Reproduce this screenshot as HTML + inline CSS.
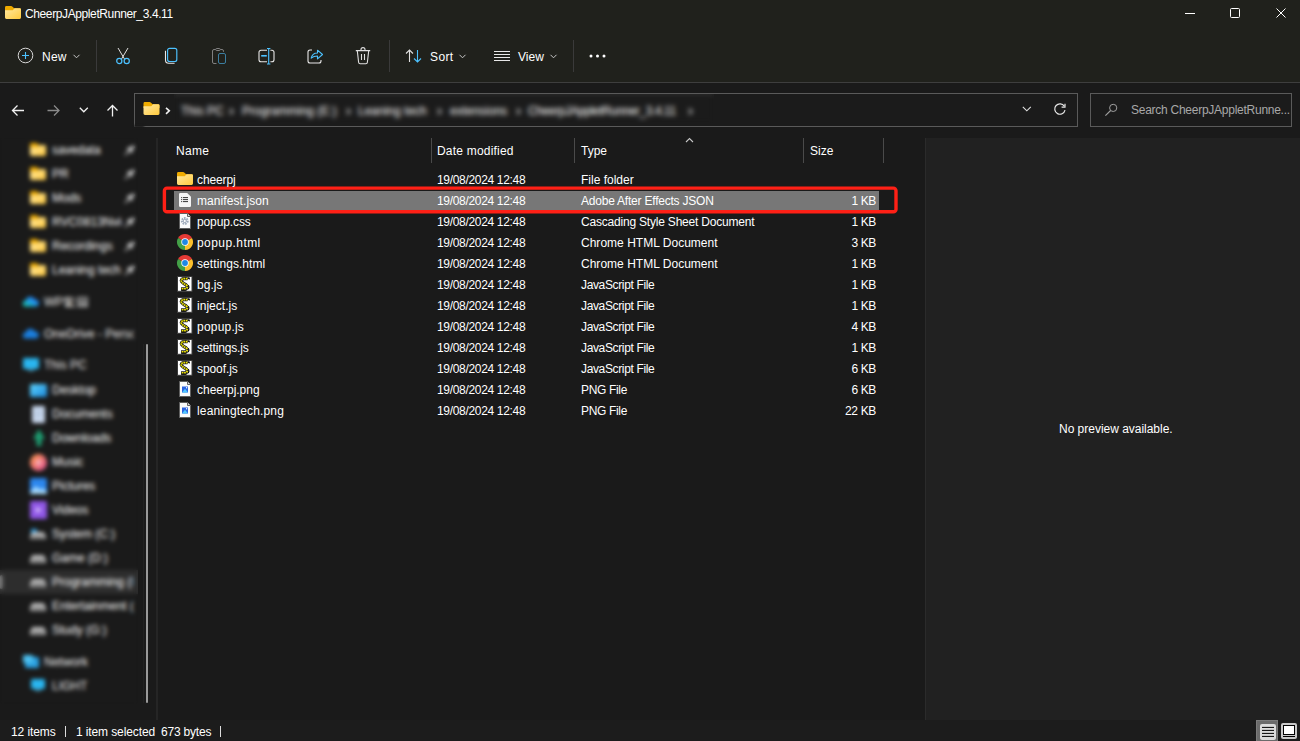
<!DOCTYPE html>
<html><head><meta charset="utf-8">
<style>
*{margin:0;padding:0;box-sizing:border-box}
html,body{width:1300px;height:741px;overflow:hidden;background:#191919;font-family:"Liberation Sans",sans-serif;color:#fff}
.a{position:absolute}
.t{position:absolute;white-space:nowrap;font-size:12px;line-height:14px}
.d{}
.vsep{position:absolute;width:1px;background:#3a3a3a}
svg{position:absolute;overflow:visible}
.blur{position:absolute;backdrop-filter:blur(2.8px);-webkit-backdrop-filter:blur(2.8px)}
.blur2{position:absolute;backdrop-filter:blur(2.2px);-webkit-backdrop-filter:blur(2.2px)}
</style></head><body>
<svg width="0" height="0" style="left:0;top:0"><defs><linearGradient id="fg" x1="0" y1="0" x2="1" y2="1"><stop offset="0" stop-color="#ffe9a3"/><stop offset="1" stop-color="#ffc93c"/></linearGradient><linearGradient id="wg" x1="0" y1="1" x2="1" y2="0"><stop offset="0" stop-color="#19d3a2"/><stop offset="0.6" stop-color="#1f8ff0"/><stop offset="1" stop-color="#2d6cf0"/></linearGradient></defs></svg>
<div class="a" style="left:0;top:0;width:1300px;height:82px;background:#20211c"></div>
<div class="a" style="left:0;top:82px;width:1300px;height:1px;background:#3e3e3e"></div>
<div class="a" style="left:0;top:83px;width:1300px;height:55px;background:#1a1a1a"></div>
<div class="a" style="left:0;top:138px;width:157px;height:582px;background:#1a1a1a"></div>
<div class="a" style="left:158px;top:138px;width:767px;height:582px;background:#1a1a1a"></div>
<div class="a" style="left:925px;top:138px;width:375px;height:582px;background:#212121;border-left:1px solid #2b2b2b"></div>
<div class="a" style="left:0;top:720px;width:1300px;height:21px;background:#1c1c1c"></div>
<svg style="left:5px;top:6px" width="16" height="13" viewBox="0 0 16 13"><path d="M1.4 0H6.2a1.4 1.4 0 0 1 1 .4L9.2 2.2H14.6A1.4 1.4 0 0 1 16 3.6V6H0V1.4A1.4 1.4 0 0 1 1.4 0z" fill="#efab00"/><path d="M0 4.2H7.3a1 1 0 0 0 .7-.3L9.6 2.2H14.6A1.4 1.4 0 0 1 16 3.6V11.6A1.4 1.4 0 0 1 14.6 13H1.4A1.4 1.4 0 0 1 0 11.6z" fill="url(#fg)"/></svg>
<div class="t" style="left:25px;top:7px;letter-spacing:-0.388px">CheerpJAppletRunner_3.4.11</div>
<svg style="left:1185px;top:12px" width="10" height="2"><rect x="0" y="1" width="10" height="1" fill="#fff"/></svg>
<svg style="left:1230px;top:8px" width="10" height="10"><rect x="0.5" y="0.5" width="9" height="9" rx="1" fill="none" stroke="#fff" stroke-width="1"/></svg>
<svg style="left:1276px;top:8px" width="10" height="10"><path d="M0.5 0.5L9.5 9.5M9.5 0.5L0.5 9.5" stroke="#fff" stroke-width="1"/></svg>
<svg style="left:17px;top:47px" width="17" height="17" viewBox="0 0 17 17">
  <circle cx="8.5" cy="8.5" r="7.3" fill="none" stroke="#d8d8d8" stroke-width="1"/>
  <path d="M8.5 5v7M5 8.5h7" stroke="#4cc2ff" stroke-width="1.1"/></svg>
<div class="t" style="left:42px;top:50px;letter-spacing:0.25px">New</div>
<svg style="left:73px;top:54px" width="7" height="5"><path d="M0.5 0.8L3.5 3.8L6.5 0.8" fill="none" stroke="#c8c8c8" stroke-width="1"/></svg>
<div class="vsep" style="left:96px;top:40px;height:32px"></div>
<svg style="left:115px;top:47px" width="16" height="18" viewBox="0 0 16 18">
  <path d="M3 1L9.6 12.2M13 1L6.4 12.2" stroke="#e0e0e0" stroke-width="1" fill="none"/>
  <circle cx="4.3" cy="14" r="2.6" fill="none" stroke="#4cc2ff" stroke-width="1.2"/>
  <circle cx="11.7" cy="14" r="2.6" fill="none" stroke="#4cc2ff" stroke-width="1.2"/></svg>
<svg style="left:164px;top:47px" width="16" height="18" viewBox="0 0 16 18">
  <path d="M1.5 3.8v9.2a3.3 3.3 0 0 0 3.3 3.3h5.8" fill="none" stroke="#e8e8e8" stroke-width="1.1"/>
  <rect x="3.6" y="1.3" width="9.2" height="13.2" rx="2" fill="none" stroke="#4cc2ff" stroke-width="1.15"/></svg>
<svg style="left:211px;top:47px" width="17" height="18" viewBox="0 0 17 18">
  <path d="M5.5 16.5H3a1.5 1.5 0 0 1-1.5-1.5V4A1.5 1.5 0 0 1 3 2.5H4.6M9.4 2.5H11a1.5 1.5 0 0 1 1.5 1.5v.8" fill="none" stroke="#808080" stroke-width="1"/>
  <rect x="4.7" y="1.5" width="4.6" height="2" rx="1" fill="none" stroke="#808080" stroke-width="1"/>
  <rect x="7.5" y="6.5" width="7" height="10" rx="1.5" fill="none" stroke="#3c7e9f" stroke-width="1"/></svg>
<svg style="left:258px;top:48px" width="18" height="18" viewBox="0 0 18 18">
  <path d="M9 2.2H3a2 2 0 0 0-2 2v7.6a2 2 0 0 0 2 2h6M12.4 2.2H14a2 2 0 0 1 2 2v7.6a2 2 0 0 1-2 2h-1.6" fill="none" stroke="#e8e8e8" stroke-width="1.1"/>
  <path d="M10.7 0.5v15.5M9 0.5h3.4M9 16h3.4" stroke="#4cc2ff" stroke-width="1.1" fill="none"/>
  <path d="M3.2 7.8h5.6" stroke="#4cc2ff" stroke-width="1.6"/></svg>
<svg style="left:307px;top:48px" width="18" height="17" viewBox="0 0 18 17">
  <path d="M5 2H3a2 2 0 0 0-2 2v9a2 2 0 0 0 2 2h9a2 2 0 0 0 2-2v-1" fill="none" stroke="#e8e8e8" stroke-width="1.1"/>
  <path d="M4.2 10.2C4.8 6.8 7 5 10.5 5V2.2l5 4.3-5 4.3V8C8 8 5.8 8.8 4.2 10.2z" fill="none" stroke="#4cc2ff" stroke-width="1.1" stroke-linejoin="round"/></svg>
<svg style="left:355px;top:47px" width="16" height="18" viewBox="0 0 16 18">
  <path d="M0.8 3.6h14.4M6 3.6V2.6a2 2 0 0 1 4 0v1" fill="none" stroke="#e0e0e0" stroke-width="1.1"/>
  <path d="M2.3 3.8l1.3 11.5a1.6 1.6 0 0 0 1.6 1.4h5.6a1.6 1.6 0 0 0 1.6-1.4l1.3-11.5" fill="none" stroke="#e0e0e0" stroke-width="1.1"/>
  <path d="M6.5 7v6M9.5 7v6" stroke="#e0e0e0" stroke-width="1.1"/></svg>
<div class="vsep" style="left:389px;top:40px;height:32px"></div>
<svg style="left:405px;top:49px" width="18" height="14" viewBox="0 0 18 14">
  <path d="M4.5 13V1M1 4.5L4.5 1L8 4.5" fill="none" stroke="#e0e0e0" stroke-width="1.1"/>
  <path d="M12.5 1v12M9 9.5L12.5 13L16 9.5" fill="none" stroke="#4cc2ff" stroke-width="1.1"/></svg>
<div class="t" style="left:430px;top:50px;letter-spacing:0.4px">Sort</div>
<svg style="left:459px;top:54px" width="7" height="5"><path d="M0.5 0.8L3.5 3.8L6.5 0.8" fill="none" stroke="#c8c8c8" stroke-width="1"/></svg>
<svg style="left:494px;top:50px" width="16" height="12" viewBox="0 0 16 12">
  <path d="M0 1.5h16M0 4.5h16M0 7.5h16M0 10.5h16" stroke="#e8e8e8" stroke-width="1"/></svg>
<div class="t" style="left:518px;top:50px">View</div>
<svg style="left:550px;top:54px" width="7" height="5"><path d="M0.5 0.8L3.5 3.8L6.5 0.8" fill="none" stroke="#c8c8c8" stroke-width="1"/></svg>
<div class="vsep" style="left:573px;top:40px;height:32px"></div>
<svg style="left:589px;top:54px" width="18" height="4"><circle cx="2" cy="2" r="1.5" fill="#fff"/><circle cx="8.5" cy="2" r="1.5" fill="#fff"/><circle cx="15" cy="2" r="1.5" fill="#fff"/></svg>

<svg style="left:11px;top:104px" width="14" height="12" viewBox="0 0 14 12">
  <path d="M13 6.5H1.5M6.5 1.5L1.5 6.5l5 5" fill="none" stroke="#f0f0f0" stroke-width="1.3"/></svg>
<svg style="left:47px;top:104px" width="14" height="12" viewBox="0 0 14 12">
  <path d="M0.5 6.5h11.5M7 1.5l5 5-5 5" fill="none" stroke="#8a8a8a" stroke-width="1.3"/></svg>
<svg style="left:79px;top:107px" width="10" height="6" viewBox="0 0 10 6">
  <path d="M0.8 0.8L4.8 4.8L8.8 0.8" fill="none" stroke="#f0f0f0" stroke-width="1.3"/></svg>
<svg style="left:107px;top:104px" width="12" height="13" viewBox="0 0 12 13">
  <path d="M5.5 12.5V1.5M0.5 6.5l5-5 5 5" fill="none" stroke="#f0f0f0" stroke-width="1.3"/></svg>
<div class="a" style="left:134px;top:93px;width:944px;height:34px;border:1px solid #5a5a5a;background:#1b1b1b"></div>

<div class="a" style="left:134px;top:125px;width:10px;height:3px;background:#1a1a1a;filter:blur(1px)"></div>
<svg style="left:143px;top:102px" width="17" height="13" viewBox="0 0 16 13"><path d="M1.4 0H6.2a1.4 1.4 0 0 1 1 .4L9.2 2.2H14.6A1.4 1.4 0 0 1 16 3.6V6H0V1.4A1.4 1.4 0 0 1 1.4 0z" fill="#efab00"/><path d="M0 4.2H7.3a1 1 0 0 0 .7-.3L9.6 2.2H14.6A1.4 1.4 0 0 1 16 3.6V11.6A1.4 1.4 0 0 1 14.6 13H1.4A1.4 1.4 0 0 1 0 11.6z" fill="url(#fg)"/></svg>
<svg style="left:165px;top:107px" width="6" height="8" viewBox="0 0 6 8">
  <path d="M1 0.8L4.3 3.8L1 6.8" fill="none" stroke="#f0f0f0" stroke-width="1.6"/></svg>
<div class="a" style="left:174px;top:94px;width:540px;height:29px;overflow:hidden">
<div class="t" style="left:7px;top:10px">This PC</div>
<svg style="left:55px;top:14px" width="5" height="7" viewBox="0 0 5 7"><path d="M1 0.8L3.8 3.5L1 6.2" fill="none" stroke="#e8e8e8" stroke-width="1.5"/></svg>
<div class="t" style="left:68px;top:10px">Programming (E:)</div>
<svg style="left:172px;top:14px" width="5" height="7" viewBox="0 0 5 7"><path d="M1 0.8L3.8 3.5L1 6.2" fill="none" stroke="#e8e8e8" stroke-width="1.5"/></svg>
<div class="t" style="left:184px;top:10px">Leaning tech</div>
<svg style="left:263px;top:14px" width="5" height="7" viewBox="0 0 5 7"><path d="M1 0.8L3.8 3.5L1 6.2" fill="none" stroke="#e8e8e8" stroke-width="1.5"/></svg>
<div class="t" style="left:276px;top:10px">extensions</div>
<svg style="left:342px;top:14px" width="5" height="7" viewBox="0 0 5 7"><path d="M1 0.8L3.8 3.5L1 6.2" fill="none" stroke="#e8e8e8" stroke-width="1.5"/></svg>
<div class="t" style="left:354px;top:10px;letter-spacing:-0.388px">CheerpJAppletRunner_3.4.11</div>
<svg style="left:514px;top:14px" width="5" height="7" viewBox="0 0 5 7"><path d="M1 0.8L3.8 3.5L1 6.2" fill="none" stroke="#e8e8e8" stroke-width="1.5"/></svg>
</div>
<div class="blur" style="left:174px;top:94px;width:540px;height:29px"></div>
<svg style="left:1022px;top:106px" width="10" height="6" viewBox="0 0 10 6">
  <path d="M0.8 0.8L4.8 4.8L8.8 0.8" fill="none" stroke="#e0e0e0" stroke-width="1.1"/></svg>
<svg style="left:1053px;top:103px" width="14" height="13" viewBox="0 0 14 13">
  <path d="M11.3 3.2A5.2 5.2 0 1 0 12 7.2" fill="none" stroke="#e8e8e8" stroke-width="1.2"/>
  <path d="M12 0.8v3.4H8.6" fill="none" stroke="#e8e8e8" stroke-width="1.2"/></svg>
<div class="a" style="left:1090px;top:93px;width:202px;height:34px;border:1px solid #5a5a5a;background:#1b1b1b"></div>
<svg style="left:1105px;top:104px" width="13" height="12" viewBox="0 0 13 12">
  <circle cx="8.2" cy="3.9" r="3.6" fill="none" stroke="#a0a0a0" stroke-width="1"/>
  <path d="M5.6 6.5L0.4 11.7" stroke="#a0a0a0" stroke-width="1.1"/></svg>
<div class="t" style="left:1131px;top:103px;color:#a8a8a8;letter-spacing:-0.259px">Search CheerpJAppletRunne...</div>

<svg style="left:30px;top:143px" width="16" height="13" viewBox="0 0 16 13"><path d="M1.4 0H6.2a1.4 1.4 0 0 1 1 .4L9.2 2.2H14.6A1.4 1.4 0 0 1 16 3.6V6H0V1.4A1.4 1.4 0 0 1 1.4 0z" fill="#efab00"/><path d="M0 4.2H7.3a1 1 0 0 0 .7-.3L9.6 2.2H14.6A1.4 1.4 0 0 1 16 3.6V11.6A1.4 1.4 0 0 1 14.6 13H1.4A1.4 1.4 0 0 1 0 11.6z" fill="url(#fg)"/></svg>
<div class="t" style="left:52px;top:143px;width:70px;overflow:hidden">savedata</div>
<svg style="left:124px;top:144px" width="12" height="12" viewBox="0 0 10 10"><path d="M0.8 9.2L3.6 6.4" stroke="#c8c8c8" stroke-width="1.2"/><path d="M2.6 4.2L5.8 7.4L7 6.2L6.6 4.8L8.8 2.6L7.4 1.2L5.2 3.4L3.8 3z" fill="#c8c8c8" stroke="#c8c8c8" stroke-width="0.8" stroke-linejoin="round"/></svg>
<svg style="left:30px;top:167px" width="16" height="13" viewBox="0 0 16 13"><path d="M1.4 0H6.2a1.4 1.4 0 0 1 1 .4L9.2 2.2H14.6A1.4 1.4 0 0 1 16 3.6V6H0V1.4A1.4 1.4 0 0 1 1.4 0z" fill="#efab00"/><path d="M0 4.2H7.3a1 1 0 0 0 .7-.3L9.6 2.2H14.6A1.4 1.4 0 0 1 16 3.6V11.6A1.4 1.4 0 0 1 14.6 13H1.4A1.4 1.4 0 0 1 0 11.6z" fill="url(#fg)"/></svg>
<div class="t" style="left:52px;top:167px;width:70px;overflow:hidden">PR</div>
<svg style="left:124px;top:168px" width="12" height="12" viewBox="0 0 10 10"><path d="M0.8 9.2L3.6 6.4" stroke="#c8c8c8" stroke-width="1.2"/><path d="M2.6 4.2L5.8 7.4L7 6.2L6.6 4.8L8.8 2.6L7.4 1.2L5.2 3.4L3.8 3z" fill="#c8c8c8" stroke="#c8c8c8" stroke-width="0.8" stroke-linejoin="round"/></svg>
<svg style="left:30px;top:191px" width="16" height="13" viewBox="0 0 16 13"><path d="M1.4 0H6.2a1.4 1.4 0 0 1 1 .4L9.2 2.2H14.6A1.4 1.4 0 0 1 16 3.6V6H0V1.4A1.4 1.4 0 0 1 1.4 0z" fill="#efab00"/><path d="M0 4.2H7.3a1 1 0 0 0 .7-.3L9.6 2.2H14.6A1.4 1.4 0 0 1 16 3.6V11.6A1.4 1.4 0 0 1 14.6 13H1.4A1.4 1.4 0 0 1 0 11.6z" fill="url(#fg)"/></svg>
<div class="t" style="left:52px;top:191px;width:70px;overflow:hidden">Mods</div>
<svg style="left:124px;top:192px" width="12" height="12" viewBox="0 0 10 10"><path d="M0.8 9.2L3.6 6.4" stroke="#c8c8c8" stroke-width="1.2"/><path d="M2.6 4.2L5.8 7.4L7 6.2L6.6 4.8L8.8 2.6L7.4 1.2L5.2 3.4L3.8 3z" fill="#c8c8c8" stroke="#c8c8c8" stroke-width="0.8" stroke-linejoin="round"/></svg>
<svg style="left:30px;top:215px" width="16" height="13" viewBox="0 0 16 13"><path d="M1.4 0H6.2a1.4 1.4 0 0 1 1 .4L9.2 2.2H14.6A1.4 1.4 0 0 1 16 3.6V6H0V1.4A1.4 1.4 0 0 1 1.4 0z" fill="#efab00"/><path d="M0 4.2H7.3a1 1 0 0 0 .7-.3L9.6 2.2H14.6A1.4 1.4 0 0 1 16 3.6V11.6A1.4 1.4 0 0 1 14.6 13H1.4A1.4 1.4 0 0 1 0 11.6z" fill="url(#fg)"/></svg>
<div class="t" style="left:52px;top:215px;width:70px;overflow:hidden">RVC0813Nvidia</div>
<svg style="left:124px;top:216px" width="12" height="12" viewBox="0 0 10 10"><path d="M0.8 9.2L3.6 6.4" stroke="#c8c8c8" stroke-width="1.2"/><path d="M2.6 4.2L5.8 7.4L7 6.2L6.6 4.8L8.8 2.6L7.4 1.2L5.2 3.4L3.8 3z" fill="#c8c8c8" stroke="#c8c8c8" stroke-width="0.8" stroke-linejoin="round"/></svg>
<svg style="left:30px;top:239px" width="16" height="13" viewBox="0 0 16 13"><path d="M1.4 0H6.2a1.4 1.4 0 0 1 1 .4L9.2 2.2H14.6A1.4 1.4 0 0 1 16 3.6V6H0V1.4A1.4 1.4 0 0 1 1.4 0z" fill="#efab00"/><path d="M0 4.2H7.3a1 1 0 0 0 .7-.3L9.6 2.2H14.6A1.4 1.4 0 0 1 16 3.6V11.6A1.4 1.4 0 0 1 14.6 13H1.4A1.4 1.4 0 0 1 0 11.6z" fill="url(#fg)"/></svg>
<div class="t" style="left:52px;top:239px;width:70px;overflow:hidden">Recordings</div>
<svg style="left:124px;top:240px" width="12" height="12" viewBox="0 0 10 10"><path d="M0.8 9.2L3.6 6.4" stroke="#c8c8c8" stroke-width="1.2"/><path d="M2.6 4.2L5.8 7.4L7 6.2L6.6 4.8L8.8 2.6L7.4 1.2L5.2 3.4L3.8 3z" fill="#c8c8c8" stroke="#c8c8c8" stroke-width="0.8" stroke-linejoin="round"/></svg>
<svg style="left:30px;top:263px" width="16" height="13" viewBox="0 0 16 13"><path d="M1.4 0H6.2a1.4 1.4 0 0 1 1 .4L9.2 2.2H14.6A1.4 1.4 0 0 1 16 3.6V6H0V1.4A1.4 1.4 0 0 1 1.4 0z" fill="#efab00"/><path d="M0 4.2H7.3a1 1 0 0 0 .7-.3L9.6 2.2H14.6A1.4 1.4 0 0 1 16 3.6V11.6A1.4 1.4 0 0 1 14.6 13H1.4A1.4 1.4 0 0 1 0 11.6z" fill="url(#fg)"/></svg>
<div class="t" style="left:52px;top:263px;width:70px;overflow:hidden">Leaning tech</div>
<svg style="left:124px;top:264px" width="12" height="12" viewBox="0 0 10 10"><path d="M0.8 9.2L3.6 6.4" stroke="#c8c8c8" stroke-width="1.2"/><path d="M2.6 4.2L5.8 7.4L7 6.2L6.6 4.8L8.8 2.6L7.4 1.2L5.2 3.4L3.8 3z" fill="#c8c8c8" stroke="#c8c8c8" stroke-width="0.8" stroke-linejoin="round"/></svg>
<svg style="left:23px;top:296px" width="16" height="11" viewBox="0 0 16 11"><path d="M3 10.5a3 3 0 0 1-0.3-6A5 5 0 0 1 12 3.5a3.5 3.5 0 0 1 0.5 7z" fill="url(#wg)"/></svg>
<div class="t" style="left:44px;top:295px;color:#f0f0f0">WPS</div>
<svg style="left:65px;top:296px" width="24" height="12" viewBox="0 0 24 12"><path d="M1.5 2h8M0.5 5h10M4.5 5L1.5 10.5h8.5M7 8l2.5 3" fill="none" stroke="#e8e8e8" stroke-width="1.1"/><path d="M13 1.5h9v5h-9zM12 10.5h11M13.5 6.5v4M16.5 6.5v4M19.5 6.5v4M22 6.5v4M15 4h5" fill="none" stroke="#e8e8e8" stroke-width="1.1"/></svg>
<svg style="left:23px;top:329px" width="16" height="10" viewBox="0 0 16 10"><path d="M3 9.5a3 3 0 0 1-0.3-6A5 5 0 0 1 12 2.5a3.5 3.5 0 0 1 0.5 7z" fill="#1a7fe0"/></svg>
<div class="t" style="left:44px;top:327px;width:90px;overflow:hidden;color:#f0f0f0">OneDrive - Personal</div>
<svg style="left:23px;top:358px" width="16" height="14" viewBox="0 0 16 14"><rect x="0" y="0" width="16" height="11" rx="1" fill="#29b6f0"/><rect x="5" y="11.5" width="6" height="1.5" fill="#5ab0d0"/></svg>
<div class="t" style="left:44px;top:358px;color:#f0f0f0">This PC</div>
<div class="a" style="left:0;top:570px;width:138px;height:24px;background:#2d2d2d"></div><div class="a" style="left:0;top:575px;width:3px;height:14px;background:#777;border-radius:2px"></div>
<svg style="left:30px;top:384px" width="17" height="13"><defs><linearGradient id="dk" x1="0" y1="0" x2="1" y2="1"><stop offset="0" stop-color="#5fd6ff"/><stop offset="1" stop-color="#1a86d8"/></linearGradient></defs><rect width="17" height="13" rx="1.5" fill="url(#dk)"/></svg><div class="t" style="left:52px;top:383px;width:100px;overflow:hidden">Desktop</div>
<svg style="left:32px;top:406px" width="13" height="17"><rect width="13" height="17" rx="1.5" fill="#c9d8ee"/><path d="M3 5h7M3 8h7M3 11h5" stroke="#9fb4d0" stroke-width="1"/></svg><div class="t" style="left:52px;top:407px;width:100px;overflow:hidden">Documents</div>
<svg style="left:33px;top:429px" width="12" height="18"><path d="M6 0L12 10H8.5v7h-5v-7H0z" fill="#1e9e72"/></svg><div class="t" style="left:52px;top:431px;width:100px;overflow:hidden">Downloads</div>
<svg style="left:30px;top:454px" width="17" height="17"><defs><linearGradient id="mu" x1="0" y1="0" x2="1" y2="1"><stop offset="0" stop-color="#ff9a4a"/><stop offset="1" stop-color="#e0509a"/></linearGradient></defs><circle cx="8.5" cy="8.5" r="8.5" fill="url(#mu)"/><circle cx="8.5" cy="8.5" r="2.5" fill="#f6c0d0"/></svg><div class="t" style="left:52px;top:455px;width:100px;overflow:hidden">Music</div>
<svg style="left:30px;top:478px" width="17" height="16"><rect width="17" height="16" rx="1.5" fill="#2b86ee"/><path d="M0 14L6 8l4 4 3-2 4 4v2H0z" fill="#a8dcff"/></svg><div class="t" style="left:52px;top:479px;width:100px;overflow:hidden">Pictures</div>
<svg style="left:30px;top:501px" width="17" height="18"><rect width="17" height="18" rx="1.5" fill="#8f56e6"/><path d="M6 6l6 3-6 3z" fill="#e0ccff"/></svg><div class="t" style="left:52px;top:503px;width:100px;overflow:hidden">Videos</div>
<svg style="left:30px;top:528px" width="16" height="11"><path d="M1 1h6v5H1z" fill="#2a9be0"/><path d="M2.5 4h11l2.5 4v3H0V8z" fill="#b8b8b8"/><rect x="1" y="8" width="14" height="2" fill="#707070"/></svg><div class="t" style="left:52px;top:527px;width:100px;overflow:hidden">System (C:)</div>
<svg style="left:30px;top:555px" width="16" height="8"><path d="M2.5 0h11l2.5 4v4H0V4z" fill="#b8b8b8"/><rect x="1" y="4.5" width="14" height="2.2" fill="#707070"/></svg><div class="t" style="left:52px;top:551px;width:100px;overflow:hidden">Game (D:)</div>
<svg style="left:30px;top:579px" width="16" height="8"><path d="M2.5 0h11l2.5 4v4H0V4z" fill="#b8b8b8"/><rect x="1" y="4.5" width="14" height="2.2" fill="#707070"/></svg><div class="t" style="left:52px;top:575px;width:81px;overflow:hidden">Programming (E:)</div>
<svg style="left:30px;top:603px" width="16" height="8"><path d="M2.5 0h11l2.5 4v4H0V4z" fill="#b8b8b8"/><rect x="1" y="4.5" width="14" height="2.2" fill="#707070"/></svg><div class="t" style="left:52px;top:599px;width:81px;overflow:hidden">Entertainment (F:)</div>
<svg style="left:30px;top:627px" width="16" height="8"><path d="M2.5 0h11l2.5 4v4H0V4z" fill="#b8b8b8"/><rect x="1" y="4.5" width="14" height="2.2" fill="#707070"/></svg><div class="t" style="left:52px;top:623px;width:100px;overflow:hidden">Study (G:)</div>
<svg style="left:23px;top:655px" width="16" height="13"><rect x="2" y="2" width="14" height="11" rx="1" fill="#2aa0e0"/><rect x="0" y="0" width="10" height="8" rx="1" fill="#4cc0f0"/></svg>
<div class="t" style="left:44px;top:655px;color:#f0f0f0">Network</div>
<svg style="left:31px;top:679px" width="14" height="13"><rect width="14" height="10" rx="1" fill="#29b6f0"/><rect x="4" y="10.5" width="6" height="1.5" fill="#5ab0d0"/></svg>
<div class="t" style="left:52px;top:679px;color:#f0f0f0">LIGHT</div>
<div class="blur2" style="left:0;top:138px;width:138px;height:566px"></div>
<div class="a" style="left:146px;top:344px;width:2px;height:359px;background:#9a9a9a;border-radius:1px"></div>
<div class="a" style="left:156px;top:138px;width:2px;height:582px;background:#252525"></div>
<div class="a" style="left:143px;top:344px;width:1px;height:359px;background:#212121"></div>
<div class="t" style="left:176px;top:144px;letter-spacing:0.333px">Name</div>
<div class="t" style="left:437px;top:144px;letter-spacing:0.208px">Date modified</div>
<div class="t" style="left:581px;top:144px">Type</div>
<div class="t" style="left:810px;top:144px">Size</div>
<div class="a" style="left:431px;top:138px;width:1px;height:25px;background:#4a4a4a"></div>
<div class="a" style="left:574px;top:138px;width:1px;height:25px;background:#4a4a4a"></div>
<div class="a" style="left:803px;top:138px;width:1px;height:25px;background:#4a4a4a"></div>
<div class="a" style="left:883px;top:138px;width:1px;height:25px;background:#4a4a4a"></div>
<svg style="left:685px;top:137px" width="10" height="6" viewBox="0 0 10 6"><path d="M1 5L4.5 1.5L8 5" fill="none" stroke="#c8c8c8" stroke-width="1.1"/></svg>
<div class="a" style="left:174px;top:191px;width:705px;height:19px;background:#777777"></div>
<svg style="left:160px;top:184px" width="740" height="32"><rect x="4.4" y="4.1" width="731.6" height="23.7" rx="2.6" fill="none" stroke="#ff2016" stroke-width="3.4"/></svg>
<svg style="left:177px;top:172px" width="16" height="13" viewBox="0 0 16 13"><path d="M1.4 0H6.2a1.4 1.4 0 0 1 1 .4L9.2 2.2H14.6A1.4 1.4 0 0 1 16 3.6V6H0V1.4A1.4 1.4 0 0 1 1.4 0z" fill="#efab00"/><path d="M0 4.2H7.3a1 1 0 0 0 .7-.3L9.6 2.2H14.6A1.4 1.4 0 0 1 16 3.6V11.6A1.4 1.4 0 0 1 14.6 13H1.4A1.4 1.4 0 0 1 0 11.6z" fill="url(#fg)"/></svg>
<div class="t" style="left:197px;top:173px;letter-spacing:-0.117px">cheerpj</div>
<div class="t d" style="left:437px;top:173px;letter-spacing:-0.32px">19/08/2024 12:48</div>
<div class="t" style="left:581px;top:173px">File folder</div>
<svg style="left:179px;top:193px" width="12" height="15" viewBox="0 0 12 15"><path d="M1.2 0H8.2l3.8 3.8V12.8A1.2 1.2 0 0 1 10.8 14H1.2A1.2 1.2 0 0 1 0 12.8V1.2A1.2 1.2 0 0 1 1.2 0z" fill="#f4f4f4"/><path d="M3.8 4.6h5.2M3.8 6.6h5.2M3.8 8.6h5.2" stroke="#333" stroke-width="1"/><path d="M2 4.6h0.9M2 6.6h0.9M2 8.6h0.9" stroke="#333" stroke-width="1"/></svg>
<div class="t" style="left:197px;top:194px;letter-spacing:0.083px">manifest.json</div>
<div class="t d" style="left:437px;top:194px;letter-spacing:-0.32px">19/08/2024 12:48</div>
<div class="t" style="left:581px;top:194px;letter-spacing:-0.217px">Adobe After Effects JSON</div>
<div class="t" style="left:776px;top:194px;width:100px;text-align:right;letter-spacing:-0.35px">1 KB</div>
<svg style="left:179px;top:213px" width="12" height="16" viewBox="0 0 12 16"><path d="M0.5 0.5H8.5l3 3v12H0.5z" fill="#fafafa" stroke="#606060" stroke-width="1"/><path d="M8.5 0.5v3h3" fill="#ddd" stroke="#606060" stroke-width="1"/><circle cx="5.8" cy="8" r="2.9" fill="none" stroke="#9eaabb" stroke-width="2" stroke-dasharray="1.6 0.9"/><circle cx="5.8" cy="8" r="1.6" fill="none" stroke="#9eaabb" stroke-width="1"/></svg>
<div class="t" style="left:197px;top:215px;letter-spacing:-0.112px">popup.css</div>
<div class="t d" style="left:437px;top:215px;letter-spacing:-0.32px">19/08/2024 12:48</div>
<div class="t" style="left:581px;top:215px;letter-spacing:-0.2px">Cascading Style Sheet Document</div>
<div class="t" style="left:776px;top:215px;width:100px;text-align:right;letter-spacing:-0.35px">1 KB</div>
<svg style="left:177px;top:234px" width="16" height="16" viewBox="0 0 16 16"><path d="M8 8L1.07 4A8 8 0 0 1 14.93 4z" fill="#e53935"/><path d="M8 8L14.93 4A8 8 0 0 1 8 16z" fill="#fbc02d"/><path d="M8 8L8 16A8 8 0 0 1 1.07 4z" fill="#43a047"/><circle cx="8" cy="8" r="3.7" fill="#fff"/><circle cx="8" cy="8" r="2.9" fill="#1e88e5"/></svg>
<div class="t" style="left:197px;top:236px;letter-spacing:0.433px">popup.html</div>
<div class="t d" style="left:437px;top:236px;letter-spacing:-0.32px">19/08/2024 12:48</div>
<div class="t" style="left:581px;top:236px;letter-spacing:0.016px">Chrome HTML Document</div>
<div class="t" style="left:776px;top:236px;width:100px;text-align:right;letter-spacing:-0.35px">3 KB</div>
<svg style="left:177px;top:255px" width="16" height="16" viewBox="0 0 16 16"><path d="M8 8L1.07 4A8 8 0 0 1 14.93 4z" fill="#e53935"/><path d="M8 8L14.93 4A8 8 0 0 1 8 16z" fill="#fbc02d"/><path d="M8 8L8 16A8 8 0 0 1 1.07 4z" fill="#43a047"/><circle cx="8" cy="8" r="3.7" fill="#fff"/><circle cx="8" cy="8" r="2.9" fill="#1e88e5"/></svg>
<div class="t" style="left:197px;top:257px;letter-spacing:0.075px">settings.html</div>
<div class="t d" style="left:437px;top:257px;letter-spacing:-0.32px">19/08/2024 12:48</div>
<div class="t" style="left:581px;top:257px;letter-spacing:0.016px">Chrome HTML Document</div>
<div class="t" style="left:776px;top:257px;width:100px;text-align:right;letter-spacing:-0.35px">1 KB</div>
<svg style="left:177px;top:276px" width="16" height="16" viewBox="0 0 16 16"><rect x="0.5" y="0.5" width="14.5" height="14.8" fill="#fff" stroke="#3a3a3a" stroke-width="1"/><path d="M11.8 3.2C12.8 2.2 12 1.6 10.8 2.2L9.5 3.6M10.4 9.2C12.6 9.8 12.2 12.6 10.2 13.2" fill="none" stroke="#000" stroke-width="1.3"/><path d="M10.5 2.6H7.2C4.8 2.6 3.6 4 4.6 5.6L6.2 7.2C7 8 8.6 8.2 9.6 9.4C10.6 10.6 10.2 12.8 8 12.8H4" fill="none" stroke="#222" stroke-width="3.2"/><path d="M10.5 2.6H7.2C4.8 2.6 3.6 4 4.6 5.6L6.2 7.2C7 8 8.6 8.2 9.6 9.4C10.6 10.6 10.2 12.8 8 12.8H4" fill="none" stroke="#f4ea00" stroke-width="1.8" stroke-dasharray="1.6 0.7"/><path d="M4.2 14.2h5.4" stroke="#000" stroke-width="1.2"/></svg>
<div class="t" style="left:197px;top:278px;letter-spacing:0.025px">bg.js</div>
<div class="t d" style="left:437px;top:278px;letter-spacing:-0.32px">19/08/2024 12:48</div>
<div class="t" style="left:581px;top:278px;letter-spacing:-0.357px">JavaScript File</div>
<div class="t" style="left:776px;top:278px;width:100px;text-align:right;letter-spacing:-0.35px">1 KB</div>
<svg style="left:177px;top:297px" width="16" height="16" viewBox="0 0 16 16"><rect x="0.5" y="0.5" width="14.5" height="14.8" fill="#fff" stroke="#3a3a3a" stroke-width="1"/><path d="M11.8 3.2C12.8 2.2 12 1.6 10.8 2.2L9.5 3.6M10.4 9.2C12.6 9.8 12.2 12.6 10.2 13.2" fill="none" stroke="#000" stroke-width="1.3"/><path d="M10.5 2.6H7.2C4.8 2.6 3.6 4 4.6 5.6L6.2 7.2C7 8 8.6 8.2 9.6 9.4C10.6 10.6 10.2 12.8 8 12.8H4" fill="none" stroke="#222" stroke-width="3.2"/><path d="M10.5 2.6H7.2C4.8 2.6 3.6 4 4.6 5.6L6.2 7.2C7 8 8.6 8.2 9.6 9.4C10.6 10.6 10.2 12.8 8 12.8H4" fill="none" stroke="#f4ea00" stroke-width="1.8" stroke-dasharray="1.6 0.7"/><path d="M4.2 14.2h5.4" stroke="#000" stroke-width="1.2"/></svg>
<div class="t" style="left:197px;top:299px;letter-spacing:0.037px">inject.js</div>
<div class="t d" style="left:437px;top:299px;letter-spacing:-0.32px">19/08/2024 12:48</div>
<div class="t" style="left:581px;top:299px;letter-spacing:-0.357px">JavaScript File</div>
<div class="t" style="left:776px;top:299px;width:100px;text-align:right;letter-spacing:-0.35px">1 KB</div>
<svg style="left:177px;top:318px" width="16" height="16" viewBox="0 0 16 16"><rect x="0.5" y="0.5" width="14.5" height="14.8" fill="#fff" stroke="#3a3a3a" stroke-width="1"/><path d="M11.8 3.2C12.8 2.2 12 1.6 10.8 2.2L9.5 3.6M10.4 9.2C12.6 9.8 12.2 12.6 10.2 13.2" fill="none" stroke="#000" stroke-width="1.3"/><path d="M10.5 2.6H7.2C4.8 2.6 3.6 4 4.6 5.6L6.2 7.2C7 8 8.6 8.2 9.6 9.4C10.6 10.6 10.2 12.8 8 12.8H4" fill="none" stroke="#222" stroke-width="3.2"/><path d="M10.5 2.6H7.2C4.8 2.6 3.6 4 4.6 5.6L6.2 7.2C7 8 8.6 8.2 9.6 9.4C10.6 10.6 10.2 12.8 8 12.8H4" fill="none" stroke="#f4ea00" stroke-width="1.8" stroke-dasharray="1.6 0.7"/><path d="M4.2 14.2h5.4" stroke="#000" stroke-width="1.2"/></svg>
<div class="t" style="left:197px;top:320px;letter-spacing:0.214px">popup.js</div>
<div class="t d" style="left:437px;top:320px;letter-spacing:-0.32px">19/08/2024 12:48</div>
<div class="t" style="left:581px;top:320px;letter-spacing:-0.357px">JavaScript File</div>
<div class="t" style="left:776px;top:320px;width:100px;text-align:right;letter-spacing:-0.35px">4 KB</div>
<svg style="left:177px;top:339px" width="16" height="16" viewBox="0 0 16 16"><rect x="0.5" y="0.5" width="14.5" height="14.8" fill="#fff" stroke="#3a3a3a" stroke-width="1"/><path d="M11.8 3.2C12.8 2.2 12 1.6 10.8 2.2L9.5 3.6M10.4 9.2C12.6 9.8 12.2 12.6 10.2 13.2" fill="none" stroke="#000" stroke-width="1.3"/><path d="M10.5 2.6H7.2C4.8 2.6 3.6 4 4.6 5.6L6.2 7.2C7 8 8.6 8.2 9.6 9.4C10.6 10.6 10.2 12.8 8 12.8H4" fill="none" stroke="#222" stroke-width="3.2"/><path d="M10.5 2.6H7.2C4.8 2.6 3.6 4 4.6 5.6L6.2 7.2C7 8 8.6 8.2 9.6 9.4C10.6 10.6 10.2 12.8 8 12.8H4" fill="none" stroke="#f4ea00" stroke-width="1.8" stroke-dasharray="1.6 0.7"/><path d="M4.2 14.2h5.4" stroke="#000" stroke-width="1.2"/></svg>
<div class="t" style="left:197px;top:341px;letter-spacing:-0.16px">settings.js</div>
<div class="t d" style="left:437px;top:341px;letter-spacing:-0.32px">19/08/2024 12:48</div>
<div class="t" style="left:581px;top:341px;letter-spacing:-0.357px">JavaScript File</div>
<div class="t" style="left:776px;top:341px;width:100px;text-align:right;letter-spacing:-0.35px">1 KB</div>
<svg style="left:177px;top:360px" width="16" height="16" viewBox="0 0 16 16"><rect x="0.5" y="0.5" width="14.5" height="14.8" fill="#fff" stroke="#3a3a3a" stroke-width="1"/><path d="M11.8 3.2C12.8 2.2 12 1.6 10.8 2.2L9.5 3.6M10.4 9.2C12.6 9.8 12.2 12.6 10.2 13.2" fill="none" stroke="#000" stroke-width="1.3"/><path d="M10.5 2.6H7.2C4.8 2.6 3.6 4 4.6 5.6L6.2 7.2C7 8 8.6 8.2 9.6 9.4C10.6 10.6 10.2 12.8 8 12.8H4" fill="none" stroke="#222" stroke-width="3.2"/><path d="M10.5 2.6H7.2C4.8 2.6 3.6 4 4.6 5.6L6.2 7.2C7 8 8.6 8.2 9.6 9.4C10.6 10.6 10.2 12.8 8 12.8H4" fill="none" stroke="#f4ea00" stroke-width="1.8" stroke-dasharray="1.6 0.7"/><path d="M4.2 14.2h5.4" stroke="#000" stroke-width="1.2"/></svg>
<div class="t" style="left:197px;top:362px;letter-spacing:-0.086px">spoof.js</div>
<div class="t d" style="left:437px;top:362px;letter-spacing:-0.32px">19/08/2024 12:48</div>
<div class="t" style="left:581px;top:362px;letter-spacing:-0.357px">JavaScript File</div>
<div class="t" style="left:776px;top:362px;width:100px;text-align:right;letter-spacing:-0.35px">6 KB</div>
<svg style="left:179px;top:381px" width="12" height="16" viewBox="0 0 12 16"><path d="M0.5 0.5H8.5l3 3v12H0.5z" fill="#fafafa" stroke="#606060" stroke-width="1"/><path d="M8.5 0.5v3h3" fill="#ddd" stroke="#606060" stroke-width="1"/><rect x="3" y="5.5" width="6" height="6" fill="#2a63e0"/><path d="M3 11.5L6 7.8 9 11.5z" fill="#4fc8ff"/><circle cx="7.6" cy="6.8" r="0.7" fill="#fff"/></svg>
<div class="t" style="left:197px;top:383px;letter-spacing:-0.01px">cheerpj.png</div>
<div class="t d" style="left:437px;top:383px;letter-spacing:-0.32px">19/08/2024 12:48</div>
<div class="t" style="left:581px;top:383px;letter-spacing:-0.329px">PNG File</div>
<div class="t" style="left:776px;top:383px;width:100px;text-align:right;letter-spacing:-0.35px">6 KB</div>
<svg style="left:179px;top:402px" width="12" height="16" viewBox="0 0 12 16"><path d="M0.5 0.5H8.5l3 3v12H0.5z" fill="#fafafa" stroke="#606060" stroke-width="1"/><path d="M8.5 0.5v3h3" fill="#ddd" stroke="#606060" stroke-width="1"/><rect x="3" y="5.5" width="6" height="6" fill="#2a63e0"/><path d="M3 11.5L6 7.8 9 11.5z" fill="#4fc8ff"/><circle cx="7.6" cy="6.8" r="0.7" fill="#fff"/></svg>
<div class="t" style="left:197px;top:404px;letter-spacing:0.15px">leaningtech.png</div>
<div class="t d" style="left:437px;top:404px;letter-spacing:-0.32px">19/08/2024 12:48</div>
<div class="t" style="left:581px;top:404px;letter-spacing:-0.329px">PNG File</div>
<div class="t" style="left:776px;top:404px;width:100px;text-align:right;letter-spacing:-0.35px">22 KB</div>
<div class="t" style="left:1059px;top:422px;letter-spacing:-0.02px">No preview available.</div>
<div class="t" style="left:11px;top:725px;letter-spacing:-0.086px">12 items</div>
<div class="a" style="left:65px;top:726px;width:1px;height:11px;background:#ddd"></div>
<div class="t" style="left:76px;top:725px;letter-spacing:-0.114px">1 item selected</div>
<div class="t" style="left:161px;top:725px;letter-spacing:-0.2px">673 bytes</div>
<div class="a" style="left:220px;top:726px;width:1px;height:11px;background:#ddd"></div>
<div class="a" style="left:1256px;top:720px;width:22px;height:21px;background:#6b6b6b;border:1px solid #7c7c7c;border-bottom:none"></div>
<svg style="left:1260px;top:724px" width="16" height="16" viewBox="0 0 16 16"><rect width="16" height="16" rx="2" fill="#dcdcdc"/><path d="M2 3.4h12M2 6.4h12M2 9.4h12M2 12.4h12" stroke="#000" stroke-width="1"/></svg>
<svg style="left:1281px;top:723px" width="16" height="16" viewBox="0 0 16 16"><rect width="16" height="16" rx="2" fill="#c8c8c8"/><rect x="2.5" y="2.5" width="11" height="9" fill="#fff" stroke="#000" stroke-width="1"/><path d="M2 13.5h12" stroke="#000" stroke-width="1"/></svg>
</body></html>
